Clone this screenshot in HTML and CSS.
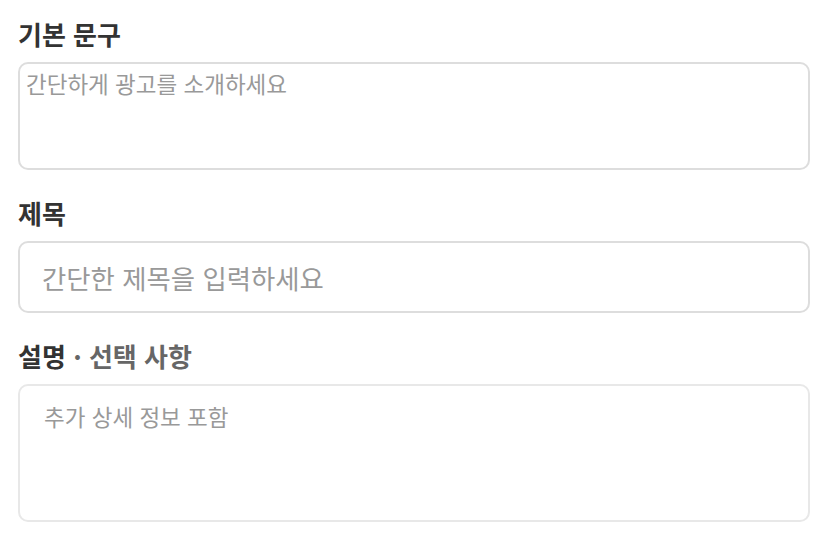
FILE: index.html
```html
<!DOCTYPE html>
<html lang="ko">
<head>
    <meta charset="UTF-8">
    <meta name="viewport" content="width=device-width, initial-scale=1.0">
    <title>광고 문구</title>
    <link rel="stylesheet" href="styles.css">
</head>
<body>
    <form class="ad-form">
        <div class="form-group">
            <label for="primaryText">기본 문구</label>
            <textarea id="primaryText" class="field field-primary" placeholder="간단하게 광고를 소개하세요"></textarea>
        </div>
        <div class="form-group">
            <label for="headline">제목</label>
            <input type="text" id="headline" class="field field-title" placeholder="간단한 제목을 입력하세요">
        </div>
        <div class="form-group">
            <label for="description">설명 <span class="optional">· 선택 사항</span></label>
            <textarea id="description" class="field field-desc" placeholder="추가 상세 정보 포함"></textarea>
        </div>
    </form>
</body>
</html>
```

FILE: styles.css
```css
body {
    margin: 0;
    padding: 14px 18px 0;
    font-family: "Noto Sans CJK KR", "Noto Sans", sans-serif;
    background: #fff;
}
.ad-form {
    display: flex;
    flex-direction: column;
    gap: 23px;
}
.form-group {
    display: flex;
    flex-direction: column;
    gap: 8px;
}
label {
    font-size: 26px;
    font-weight: bold;
    line-height: 40px;
    color: #333;
}
.optional {
    color: #666;
}
.field {
    display: block;
    width: 100%;
    box-sizing: border-box;
    border: 2px solid #ddd;
    border-radius: 10px;
    font-family: inherit;
    color: #333;
    background: #fff;
    resize: none;
    outline: none;
}
.field::placeholder {
    color: #999;
}
.field-primary {
    height: 108px;
    padding: 3px 6px;
    font-size: 22.5px;
    line-height: 32px;
}
.field-title {
    height: 72px;
    padding: 0 22px;
    font-size: 26.4px;
}
.field-desc {
    height: 138px;
    padding: 14px 24px;
    font-size: 22.5px;
    line-height: 32px;
    border-color: #e8e8e8;
}
```
